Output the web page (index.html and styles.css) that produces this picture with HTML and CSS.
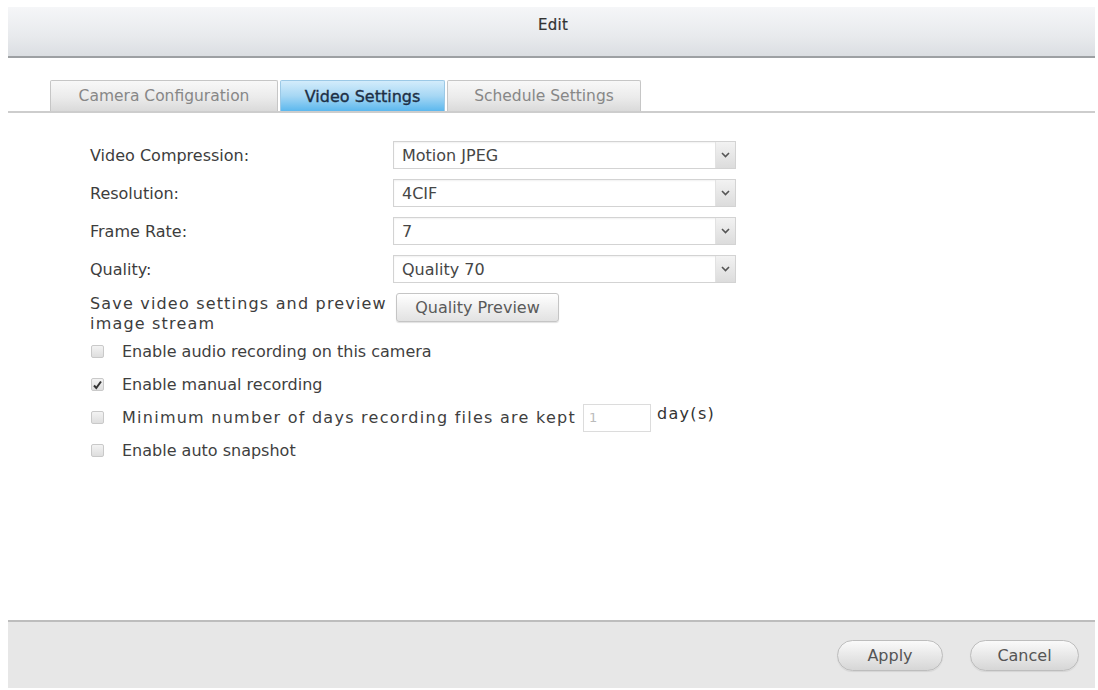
FILE: index.html
```html
<!DOCTYPE html>
<html>
<head>
<meta charset="utf-8">
<title>Edit</title>
<link rel="stylesheet" href="styles.css">
</head>
<body>
<div class="dialog">
  <div class="header"><span class="title">Edit</span></div>
  <div class="tabbar">
    <div class="tab tab-camera">Camera Configuration</div>
    <div class="tab tab-video active">Video Settings</div>
    <div class="tab tab-schedule">Schedule Settings</div>
  </div>
  <div class="content">
    <div class="form">
      <div class="row">
        <div class="label">Video Compression:</div>
        <div class="select"><span class="value">Motion JPEG</span><span class="arrow"><svg width="9" height="6" viewBox="0 0 9 6"><path d="M1 1 L4.5 4.5 L8 1" fill="none" stroke="#555" stroke-width="1.6"/></svg></span></div>
      </div>
      <div class="row">
        <div class="label">Resolution:</div>
        <div class="select"><span class="value">4CIF</span><span class="arrow"><svg width="9" height="6" viewBox="0 0 9 6"><path d="M1 1 L4.5 4.5 L8 1" fill="none" stroke="#555" stroke-width="1.6"/></svg></span></div>
      </div>
      <div class="row">
        <div class="label">Frame Rate:</div>
        <div class="select"><span class="value">7</span><span class="arrow"><svg width="9" height="6" viewBox="0 0 9 6"><path d="M1 1 L4.5 4.5 L8 1" fill="none" stroke="#555" stroke-width="1.6"/></svg></span></div>
      </div>
      <div class="row">
        <div class="label">Quality:</div>
        <div class="select"><span class="value">Quality 70</span><span class="arrow"><svg width="9" height="6" viewBox="0 0 9 6"><path d="M1 1 L4.5 4.5 L8 1" fill="none" stroke="#555" stroke-width="1.6"/></svg></span></div>
      </div>
      <div class="row preview-row">
        <div class="label preview-label">Save video settings and preview image stream</div>
        <button class="btn-preview">Quality Preview</button>
      </div>
    </div>
    <div class="checks">
      <label class="check"><span class="box"></span><span class="check-text">Enable audio recording on this camera</span></label>
      <label class="check"><span class="box checked"><svg width="11" height="10" viewBox="0 0 11 10"><path d="M2 5.5 L4.3 8 L9 1.5" fill="none" stroke="#333" stroke-width="2"/></svg></span><span class="check-text">Enable manual recording</span></label>
      <label class="check check-days"><span class="box"></span><span class="check-text wide">Minimum number of days recording files are kept</span><span class="days-input">1</span><span class="days-unit">day(s)</span></label>
      <label class="check"><span class="box"></span><span class="check-text">Enable auto snapshot</span></label>
    </div>
  </div>
  <div class="footer">
    <button class="pill btn-apply">Apply</button>
    <button class="pill btn-cancel">Cancel</button>
  </div>
</div>
</body>
</html>
```

FILE: styles.css
```css
html, body {
  margin: 0;
  padding: 0;
  background: #ffffff;
}

body {
  font-family: "DejaVu Sans", sans-serif;
  color: #333333;
}

.dialog {
  margin: 7px 3px 0 8px;
  height: 681px;
  display: flex;
  flex-direction: column;
}

.header {
  height: 51px;
  box-sizing: border-box;
  border-bottom: 2px solid #9da0a3;
  background: linear-gradient(#f5f6f8, #e8eaed 60%, #dbdee2);
  display: flex;
  justify-content: center;
  padding-top: 9px;
}

.title {
  font-size: 15px;
  color: #333;
  padding-left: 3px;
  letter-spacing: 0.3px;
  -webkit-text-stroke: 0.2px #333;
}

.tabbar {
  margin-top: 22px;
  height: 31px;
  border-bottom: 2px solid #cdcdcd;
  display: flex;
  align-items: flex-end;
  padding-left: 42px;
  gap: 2px;
}

.tab {
  height: 31px;
  box-sizing: border-box;
  border: 1px solid #c6c6c6;
  border-bottom: none;
  border-radius: 2px 2px 0 0;
  background: linear-gradient(#f8f8f8, #ebebeb 55%, #dadada);
  color: #878787;
  font-size: 15.5px;
  display: flex;
  align-items: center;
  justify-content: center;
}

.tab-camera { width: 228px; }
.tab-video { width: 165px; }
.tab-schedule { width: 194px; }

.tab.active {
  background: linear-gradient(#d3ecfb, #a6d7f4 50%, #5cb8ee);
  border-color: #9cc9e6;
  color: #1d2f45;
  font-size: 16px;
  -webkit-text-stroke: 0.35px #1d2f45;
}

.content {
  flex: 1;
  padding: 28px 0 0 82px;
}

.form {
  display: flex;
  flex-direction: column;
  gap: 10px;
}

.row {
  display: flex;
  align-items: center;
  height: 28px;
}

.label {
  width: 303px;
  font-size: 16px;
  color: #3d3d3d;
}

.select {
  width: 343px;
  height: 28px;
  box-sizing: border-box;
  border: 1px solid #d3d3d3;
  background: #fff;
  display: flex;
  align-items: center;
  box-shadow: inset 0 1px 2px rgba(0,0,0,0.06);
}

.select .value {
  flex: 1;
  padding-left: 8px;
  font-size: 16px;
  color: #464646;
}

.select .arrow {
  width: 19px;
  height: 26px;
  background: linear-gradient(#f2f2f2, #dcdcdc);
  border-left: 1px solid #e2e2e2;
  display: flex;
  align-items: center;
  justify-content: center;
}

.preview-row {
  height: auto;
  align-items: flex-start;
}

.preview-label {
  width: 306px;
  line-height: 20px;
  padding-top: 1px;
  letter-spacing: 1.18px;
}

.btn-preview {
  width: 163px;
  height: 29px;
  border: 1px solid #c5c5c5;
  border-radius: 3px;
  background: linear-gradient(#ffffff, #f0f0f0 50%, #e2e2e2);
  font-family: inherit;
  font-size: 16px;
  color: #5a5a5a;
  box-shadow: 0 1px 1px rgba(0,0,0,0.12);
  padding: 0;
}

.checks {
  margin-top: 1px;
  display: flex;
  flex-direction: column;
}

.check {
  display: flex;
  align-items: center;
  height: 33px;
}

.box {
  width: 13px;
  height: 13px;
  box-sizing: border-box;
  border: 1px solid #c9c9c9;
  border-radius: 2px;
  background: linear-gradient(#f3f3f3, #dedede);
  margin-left: 1px;
  margin-right: 18px;
  display: flex;
  align-items: center;
  justify-content: center;
}

.box svg {
  flex: none;
}

.check-text {
  font-size: 16px;
  color: #3f3f3f;
}

.check-text.wide {
  letter-spacing: 1.26px;
}

.days-input {
  width: 68px;
  height: 28px;
  box-sizing: border-box;
  border: 1px solid #dcdcdc;
  margin-left: 7px;
  font-size: 13px;
  color: #bbb;
  padding-left: 5px;
  display: flex;
  align-items: center;
}

.days-unit {
  font-size: 16px;
  letter-spacing: 1.3px;
  margin-left: 6px;
  margin-top: -8px;
}

.footer {
  height: 66px;
  border-top: 2px solid #bdbdbd;
  background: #e7e7e7;
  display: flex;
  justify-content: flex-end;
  align-items: center;
  gap: 27px;
  padding-right: 16px;
}

.pill {
  height: 31px;
  border: 1px solid #bdbdbd;
  border-radius: 16px;
  background: linear-gradient(#fafafa, #e8e8e8 50%, #d6d6d6);
  font-family: inherit;
  font-size: 16px;
  color: #555;
  padding: 0;
  box-shadow: 0 1px 1px rgba(0,0,0,0.08);
}

.btn-apply { width: 106px; }
.btn-cancel { width: 109px; }
```
